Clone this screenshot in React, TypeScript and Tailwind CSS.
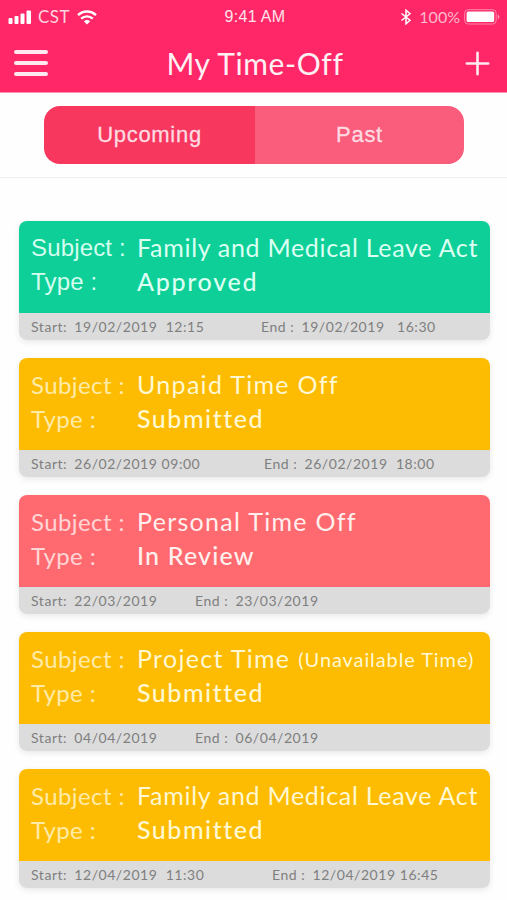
import clsx from "clsx"

const requests = [
  {
    subject: "Family and Medical Leave Act", subjectClass: "tracking-[0.7px]",
    type: "Approved", typeClass: "tracking-[1.7px]", start: "19/02/2019  12:15", end: "19/02/2019   16:30",
    color: "bg-[#0dcf97] text-[#dcfff3]", labelClass: "font-['Liberation_Sans'] tracking-[0.15px] text-[#d4fdef]", endClass: "ml-[242px]",
  },
  {
    subject: "Unpaid Time Off", subjectClass: "tracking-[1.3px]",
    type: "Submitted", typeClass: "tracking-[1.5px]", start: "26/02/2019 09:00", end: "26/02/2019  18:00",
    color: "bg-[#fdbb02] text-[#fff8d2]", labelClass: "tracking-[0.4px] text-[#ffeba8]", endClass: "ml-[245px]",
  },
  {
    subject: "Personal Time Off", subjectClass: "tracking-[1.3px]",
    type: "In Review", typeClass: "tracking-[1.2px]", start: "22/03/2019", end: "23/03/2019",
    color: "bg-[#ff6a70] text-[#fff0ee]", labelClass: "tracking-[0.4px] text-[#ffd5d5]", endClass: "ml-[176px]",
  },
  {
    subject: "Project Time", note: "(Unavailable Time)", subjectClass: "tracking-[1.3px]",
    type: "Submitted", typeClass: "tracking-[1.5px]", start: "04/04/2019", end: "06/04/2019",
    color: "bg-[#fdbb02] text-[#fff8d2]", labelClass: "tracking-[0.4px] text-[#ffeba8]", endClass: "ml-[176px]",
  },
  {
    subject: "Family and Medical Leave Act", subjectClass: "tracking-[0.7px]",
    type: "Submitted", typeClass: "tracking-[1.5px]", start: "12/04/2019  11:30", end: "12/04/2019 16:45",
    color: "bg-[#fdbb02] text-[#fff8d2]", labelClass: "tracking-[0.4px] text-[#ffeba8]", endClass: "ml-[253px]",
  },
]

function StatusBar() {
  return (
    <div className="grid grid-cols-3 h-8 pl-2 pr-[7px] text-[#ffd3df]">
      <div className="flex items-center">
        <svg width="24" height="15" viewBox="0 0 24 15" fill="#fff">
          <rect x="0.5" y="8" width="4" height="6" rx="1" />
          <rect x="6.5" y="6" width="4" height="8" rx="1" />
          <rect x="12.5" y="3.5" width="4" height="10.5" rx="1" />
          <rect x="18.5" y="0.5" width="4.5" height="13.5" rx="1" />
        </svg>
        <span className="ml-1.5 text-[17px] tracking-[0.4px]">CST</span>
        <svg className="ml-[7px]" width="20" height="15" viewBox="0 0 20 15" fill="none" stroke="#fff" strokeWidth="2.4">
          <path d="M1 5.2C6 .2 14 .2 19 5.2" />
          <path d="M4.2 8.7C7.6 5.6 12.4 5.6 15.8 8.7" />
          <path d="M6.8 11.2Q10 8.6 13.2 11.2L10 14.5Z" fill="#fff" stroke="none" />
        </svg>
      </div>
      <div className="text-center tracking-[0.3px] font-['Liberation_Sans',sans-serif] text-base leading-[34px] pl-0.5 text-[#ffe3ea]">9:41 AM</div>
      <div className="flex items-center justify-end">
        <svg width="12" height="16" viewBox="0 0 12 16" fill="none" stroke="#fff" strokeWidth="1.5">
          <path d="M1.5 4.5L10 11.2L6 14.8V1.2L10 4.8L1.5 11.5" />
        </svg>
        <span className="ml-[7px] text-base text-[#ffb9cc]">100%</span>
        <svg className="ml-1" width="36" height="16" viewBox="0 0 36 16">
          <rect x="0.7" y="0.7" width="31.5" height="14.3" rx="3.5" fill="none" stroke="#ff86a8" strokeWidth="1" />
          <rect x="2.6" y="2.6" width="27.6" height="10.5" rx="1.5" fill="#fff" />
          <path d="M33.8 5.2Q37 7.8 33.8 10.4Z" fill="#ff9ab6" />
        </svg>
      </div>
    </div>
  )
}

function RequestCard({ item }: any) {
  return (
    <div className="h-[119px] rounded-lg overflow-hidden shadow-[0_2px_6px_rgba(0,0,0,0.09)]">
      <div className={clsx("h-[92px] pl-3 pt-[9px] text-[25px] leading-[34px] whitespace-nowrap", item.color)}>
        <div className="flex h-[34px]">
          <span className={clsx("w-[106px] shrink-0 text-2xl leading-[35px]", item.labelClass)}>Subject :</span>
          <span className={item.subjectClass}>{item.subject}</span>
          {item.note && <span className="ml-2 text-xl leading-[37px] tracking-[0.9px]">{item.note}</span>}
        </div>
        <div className="flex h-[34px]">
          <span className={clsx("w-[106px] shrink-0 text-2xl leading-[35px]", item.labelClass)}>Type :</span>
          <span className={clsx("font-medium", item.typeClass)}>{item.type}</span>
        </div>
      </div>
      <div className="grid h-[27px] bg-[#dcdcdc] text-[#7f7f7f] text-sm leading-[27px] tracking-[0.55px] whitespace-pre">
        <div className="col-start-1 row-start-1 ml-3"><span className="mr-[3px]">Start:</span> {item.start}</div>
        <div className={clsx("col-start-1 row-start-1", item.endClass)}><span className="mr-[3px]">End :</span> {item.end}</div>
      </div>
    </div>
  )
}

export default function App() {
  return (
    <div className="w-[507px] h-[900px] overflow-hidden bg-[#fefefe] font-['Lato',sans-serif]">
      <header className="h-[93px] bg-[#ff2768] border-b border-[#ff8dac]">
        <StatusBar />
        <div className="flex items-center justify-between h-[62px] pl-[14px] pr-[17px]">
          <div className="flex flex-col gap-[7px] w-[34px]">
            <span className="h-1 rounded-full bg-[#ffe9f0]" />
            <span className="h-1 rounded-full bg-[#ffe9f0]" />
            <span className="h-1 rounded-full bg-[#ffe9f0]" />
          </div>
          <h1 className="text-[30px] leading-none text-[#fff0f4] tracking-[0.6px] mr-[3px]">My Time-Off</h1>
          <svg width="25" height="25" viewBox="0 0 25 25" stroke="#ffeaf0" strokeWidth="2.6" strokeLinecap="round">
            <path d="M12.5 1.8V23.2M1.8 12.5H23.2" />
          </svg>
        </div>
      </header>

      <div className="h-[85px] pt-[13px] border-b border-[#f1f1f1]">
        <div className="flex w-[420px] h-[58px] ml-[44px] rounded-2xl overflow-hidden text-[22px] leading-[58px] text-center tracking-[0.7px] text-[#ffdbe1] font-['Liberation_Sans',sans-serif] [-webkit-text-stroke:0.3px_#ffdbe1]">
          <button className="w-[211px] bg-[#f7375e]">Upcoming</button>
          <button className="flex-1 bg-[#fa5c7c]">Past</button>
        </div>
      </div>

      <main className="flex flex-col gap-[18px] pt-[43px] pl-[19px] pr-[17px]">
        {requests.map((item, i) => (
          <RequestCard key={i} item={item} />
        ))}
      </main>
    </div>
  )
}
